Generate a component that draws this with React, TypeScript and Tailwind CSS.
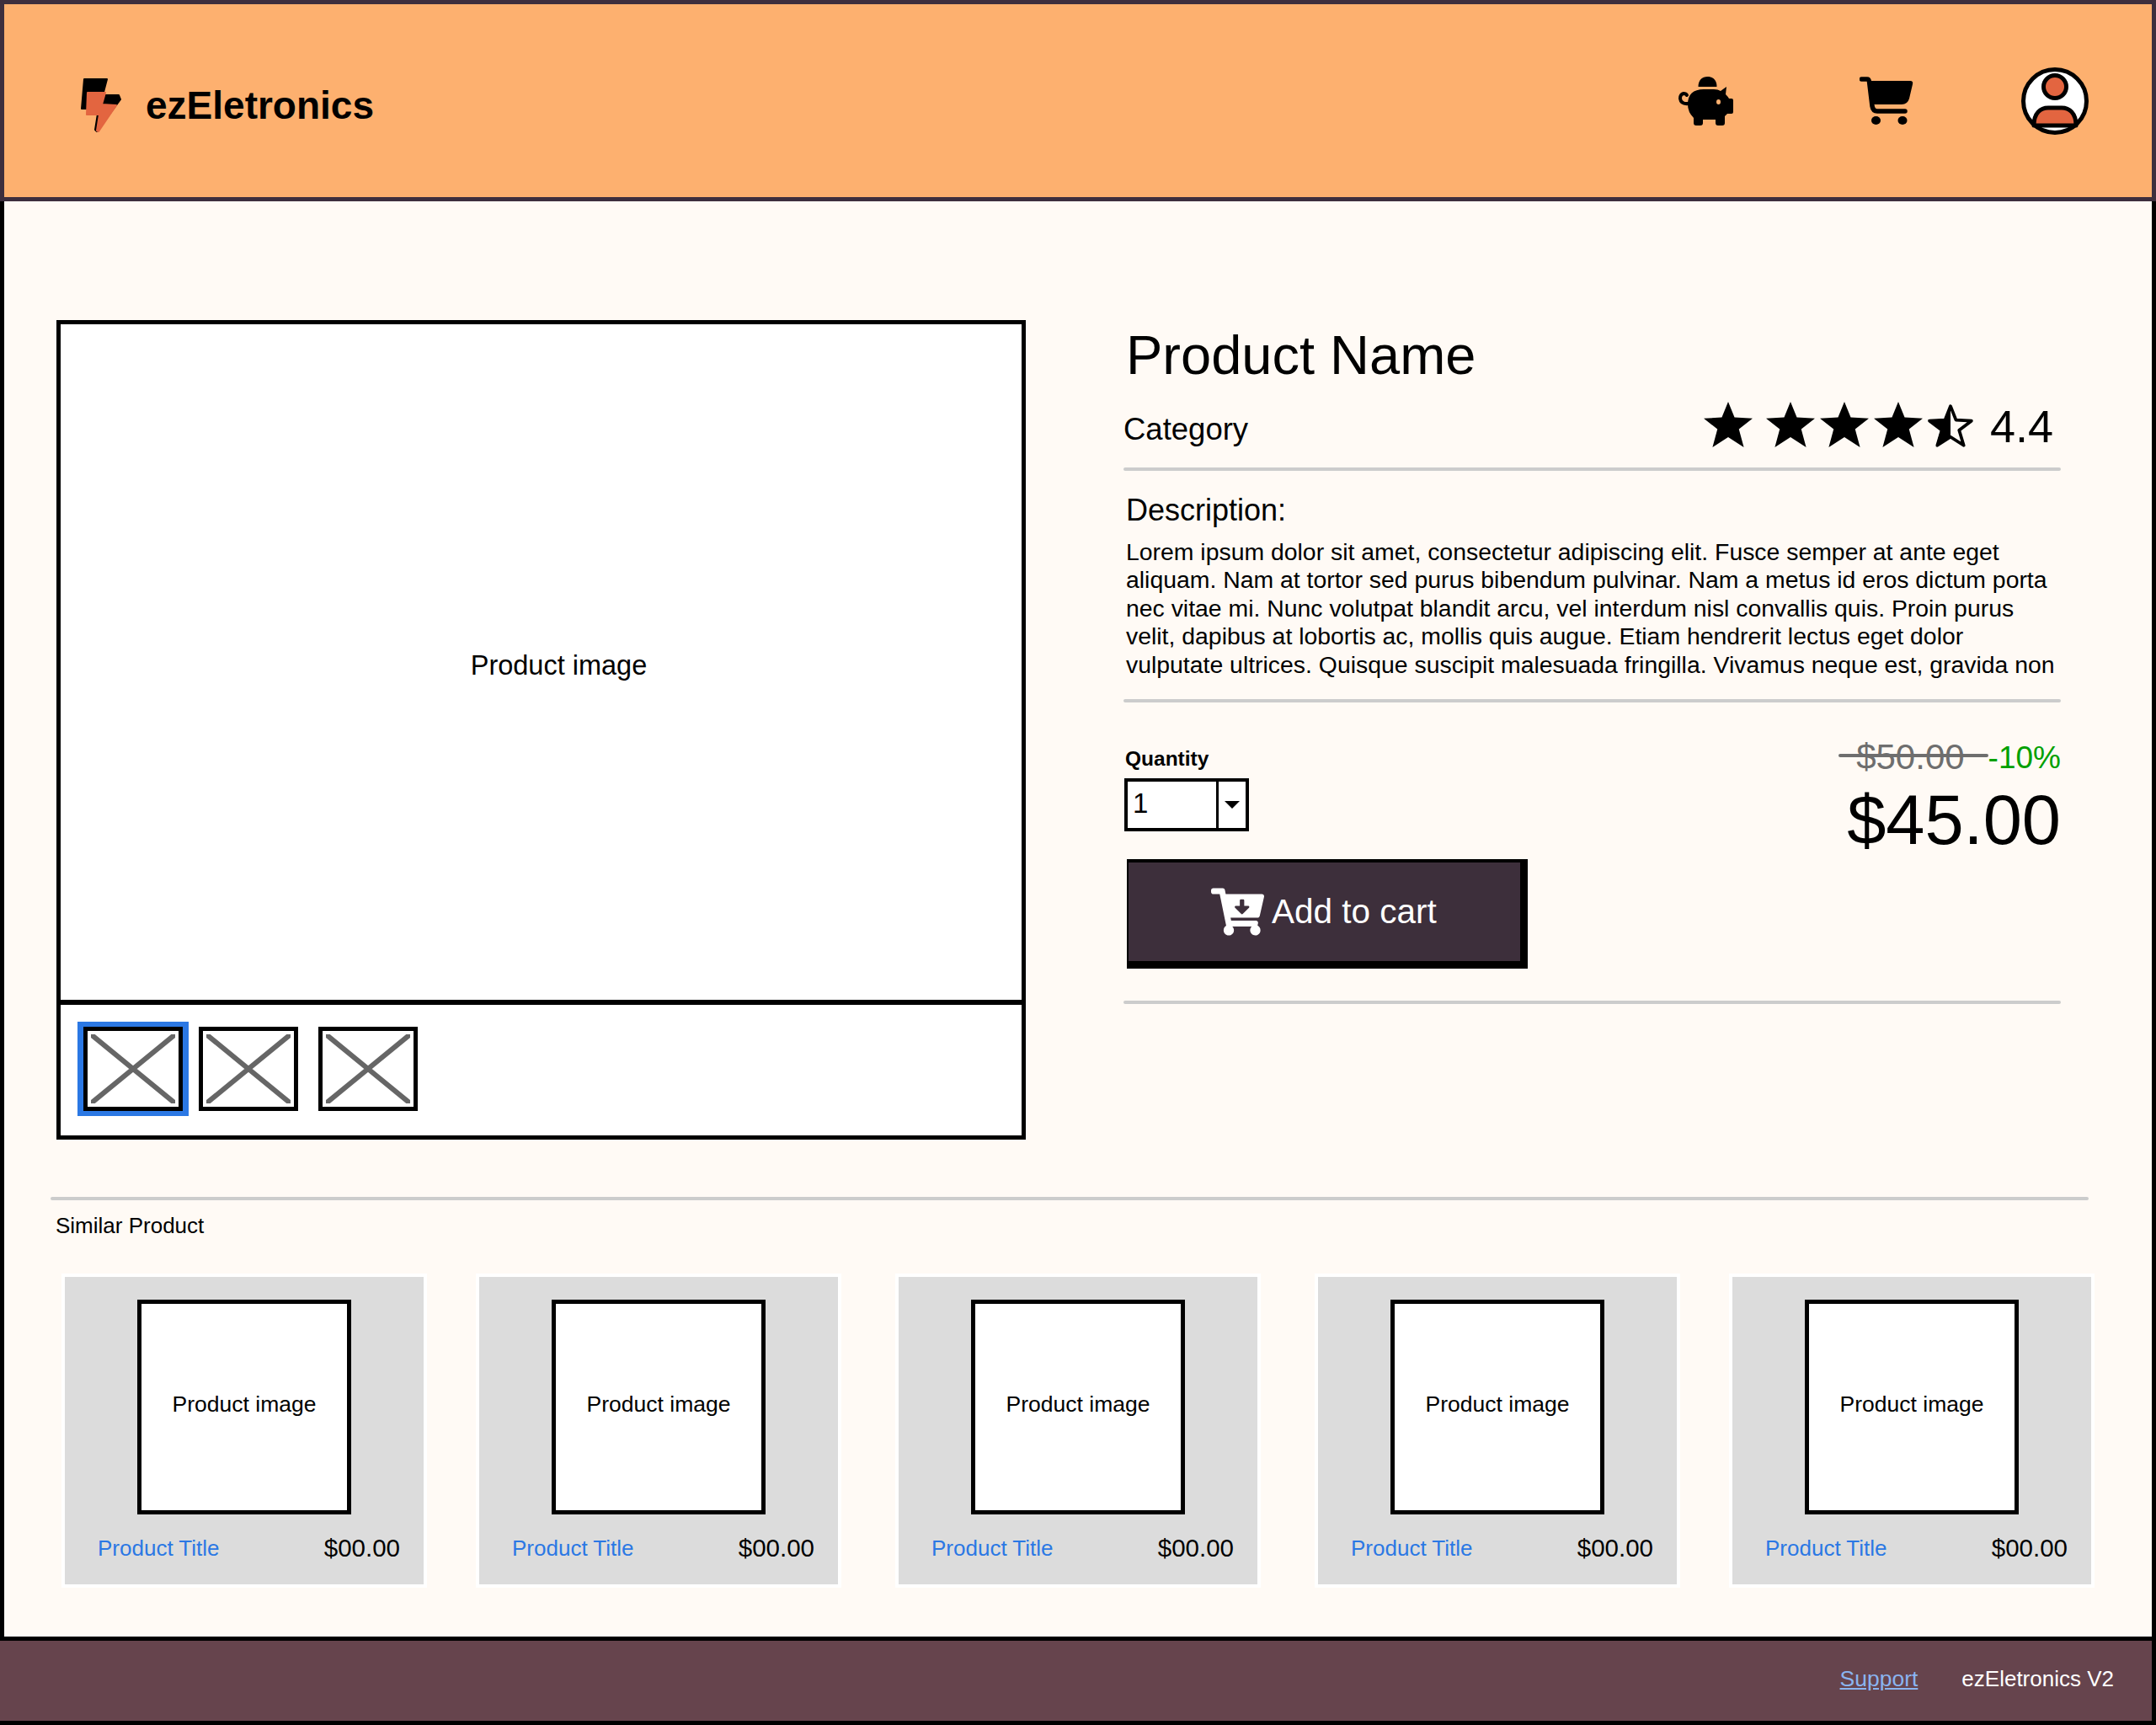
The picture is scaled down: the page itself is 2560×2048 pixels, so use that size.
import { FaCartArrowDown } from "react-icons/fa";

const LOREM = [
  "Lorem ipsum dolor sit amet, consectetur adipiscing elit. Fusce semper at ante eget",
  "aliquam. Nam at tortor sed purus bibendum pulvinar. Nam a metus id eros dictum porta",
  "nec vitae mi. Nunc volutpat blandit arcu, vel interdum nisl convallis quis. Proin purus",
  "velit, dapibus at lobortis ac, mollis quis augue. Etiam hendrerit lectus eget dolor",
  "vulputate ultrices. Quisque suscipit malesuada fringilla. Vivamus neque est, gravida non",
];

const CARD_GAPS = ["ml-[68px]", "ml-[58px]", "ml-[64px]", "ml-[64px]", "ml-[58px]"];

const STAR = "50,2 63,35 100,37 72,60 82,98 50,77 18,98 28,60 0,37 37,35";

const Logo = () => (
  <svg width="48" height="64" viewBox="0 0 48 64" className="shrink-0">
    <path d="M4 1 L31 1 L26 20 L45 20 L47 25 L19 63 L17 61 L21 36 L1 36 Z" fill="#000" stroke="#000" strokeWidth="2" strokeLinejoin="round" />
    <path d="M8 17 L29 17 L25 31 L42 32 L21 63 L19 62 L22 43 L7 43 Z" fill="#e36540" stroke="#e36540" strokeWidth="2" strokeLinejoin="round" />
  </svg>
);

const PiggyIcon = () => (
  <svg width="65" height="58" viewBox="0 0 65 58" className="shrink-0">
    <path d="M23.5 12 C23.5 4 28 0 34.5 0 C41 0 45.5 4 45.5 12 Z" fill="#000" />
    <path d="M30 15 H42 Q47 15 50 17 L57 12 L56 21 Q59 24 60 26 H63 Q65 26 65 28 V42 Q65 44 63 44 H58 Q56 46 55 47 V55 Q55 58 52 58 H47 Q44 58 44 55 V51 H29 V55 Q29 58 26 58 H21 Q18 58 18 55 V49 Q11 42 11 33 Q11 15 30 15 Z" fill="#000" />
    <path d="M12 32 Q3 33 2 26 Q2 21 6 20 Q9 20 10 22" fill="none" stroke="#000" strokeWidth="4" strokeLinecap="round" />
    <ellipse cx="47.5" cy="30" rx="2.5" ry="3" fill="#fdb06f" />
  </svg>
);

const CartIcon = () => (
  <svg width="64" height="57" viewBox="0 0 64 57" className="shrink-0">
    <path d="M2.5 3 H9 Q11 3 11.5 6 L15 35 Q16 41 21 41 H54" fill="none" stroke="#000" strokeWidth="5.5" strokeLinecap="round" strokeLinejoin="round" />
    <path d="M10 5 H60 Q64 5 63 9 L59 26 Q57 33 50 33 H14 Z" fill="#000" />
    <ellipse cx="19.5" cy="52" rx="5.5" ry="5" fill="#000" />
    <ellipse cx="51" cy="52" rx="5.5" ry="5" fill="#000" />
  </svg>
);

const Avatar = () => (
  <svg width="80" height="80" viewBox="0 0 80 80" className="shrink-0">
    <ellipse cx="40" cy="40" rx="37.5" ry="37.5" fill="#fff" stroke="#000" strokeWidth="5" />
    <ellipse cx="40" cy="23" rx="13.5" ry="13.5" fill="#e36540" stroke="#000" strokeWidth="5" />
    <path d="M15 69 C15 54 23 48 32 48 H48 C57 48 65 54 65 69 Z" fill="#e36540" stroke="#000" strokeWidth="5" strokeLinejoin="round" />
  </svg>
);

const Star = ({ className = "" }: { className?: string }) => (
  <svg width="58" height="56" viewBox="0 0 100 100" preserveAspectRatio="none" className={`shrink-0 ${className}`}>
    <polygon points={STAR} fill="#000" />
  </svg>
);

const HalfStar = () => (
  <svg width="54" height="53" viewBox="0 0 100 100" preserveAspectRatio="none" className="shrink-0 mt-[3px]">
    <polygon points="50,6 62,37 96,39 69,60 79,94 50,75 21,94 31,60 4,39 38,37" fill="none" stroke="#000" strokeWidth="7" strokeLinejoin="round" />
    <polygon points="50,3 50,75 18,97 28,60 0,37 37,35" fill="#000" />
  </svg>
);

const Thumb = ({ className = "" }: { className?: string }) => (
  <div className={`w-[118px] h-[100px] border-[5px] border-black bg-white p-[4px] ${className}`}>
    <svg width="100%" height="100%" viewBox="0 0 100 82" preserveAspectRatio="none">
      <path d="M0 0 L100 82 M100 0 L0 82" stroke="#666" strokeWidth="6" />
    </svg>
  </div>
);

const Divider = ({ className = "" }: { className?: string }) => (
  <div className={`h-[4px] bg-[#cccccc] rounded-full shrink-0 ${className}`} />
);

const ProductCard = ({ className }: { className: string }) => (
  <div className={`w-[434px] h-[373px] border-4 border-white bg-[#dcdcdc] flex flex-col shrink-0 ${className}`}>
    <div className="mt-[27px] mx-auto w-[254px] h-[255px] border-[5px] border-black bg-white flex items-center justify-center pb-[5px] text-[26.5px]">
      Product image
    </div>
    <div className="mt-[24px] pl-[39px] pr-[28px] flex items-center justify-between leading-[32px]">
      <span className="text-[26px] text-[#2b78e4]">Product Title</span>
      <span className="text-[29.5px]">$00.00</span>
    </div>
  </div>
);

export default function App() {
  return (
    <div className="w-[2560px] h-[2048px] flex flex-col bg-[#fffaf5] text-black font-['Liberation_Sans',sans-serif]">
      {/* HEADER */}
      <header className="h-[239px] shrink-0 border-[5px] border-[#3d2e3d] bg-[#fdb06f] flex items-center pl-[91px]">
        <div className="flex items-center mt-[10px]">
          <Logo />
          <span className="ml-[29px] text-[46px] font-bold leading-none">ezEletronics</span>
        </div>
        <div className="ml-auto">
          <PiggyIcon />
        </div>
        <div className="ml-[150px]">
          <CartIcon />
        </div>
        <div className="ml-[128px] mr-[75px]">
          <Avatar />
        </div>
      </header>

      {/* MAIN */}
      <main className="flex-1 border-x-[5px] border-black flex flex-col">
        <div className="flex pt-[141px]">
          {/* GALLERY */}
          <div className="ml-[62px] w-[1151px] h-[973px] border-[5px] border-black bg-white flex flex-col shrink-0">
            <div className="flex-1 flex items-center justify-center pl-[42px] pt-[8px] text-[32.5px]">Product image</div>
            <div className="h-[161px] border-t-[6px] border-black flex items-start pl-[20px] pt-[20px]">
              <div className="border-y-[6px] border-x-[7px] border-[#2b78e4]">
                <Thumb />
              </div>
              <Thumb className="ml-[12px] mt-[6px]" />
              <Thumb className="ml-[24px] mt-[6px]" />
            </div>
          </div>

          {/* DETAILS */}
          <div className="ml-[116px] w-[1113px] flex flex-col">
            <div className="h-[80px] flex items-center pl-[3px] pt-[2px] text-[65px] leading-none">Product Name</div>
            <div className="h-[95px] flex items-center justify-between">
              <span className="text-[36.5px] pt-[6px]">Category</span>
              <div className="flex items-start gap-[6px] mr-[9px] mt-[-6px]">
                <Star className="mr-[10px]" />
                <Star />
                <Star />
                <Star />
                <HalfStar />
                <span className="ml-[14px] mt-[2px] text-[54px] leading-[56px]">4.4</span>
              </div>
            </div>
            <Divider />

            <div className="h-[80px] flex items-center pt-[13px] pl-[3px] text-[36px]">Description:</div>
            <div className="pl-[3px] text-[28.4px] leading-[33.4px] whitespace-nowrap">
              {LOREM.map((line) => (
                <div key={line}>{line}</div>
              ))}
            </div>
            <Divider className="mt-[24px]" />

            <div className="flex justify-between">
              <div className="flex flex-col items-start">
                <div className="mt-[52px] h-[30px] flex items-center pl-[2px] text-[24.5px] font-bold">Quantity</div>
                <div className="mt-[8px] ml-[1px] w-[148px] h-[63px] border-4 border-black bg-white flex">
                  <div className="flex-1 pl-[6px] pt-[6px] text-[33px] leading-[40px]">1</div>
                  <div className="w-[35px] border-l-[3px] border-black flex items-center justify-center">
                    <svg width="18" height="9" viewBox="0 0 18 9">
                      <path d="M0 0 H18 L9 9 Z" fill="#000" />
                    </svg>
                  </div>
                </div>
                <div className="mt-[33px] ml-[4px] w-[476px] h-[130px] bg-black pt-[4px] pl-[2px] pr-[9px] pb-[9px]">
                  <div className="h-full bg-[#3d2f3b] flex items-center pl-[98px] text-white">
                    <FaCartArrowDown className="w-[63px] h-[57px]" />
                    <span className="ml-[9px] text-[40.5px] leading-none">Add to cart</span>
                  </div>
                </div>
              </div>
              <div className="flex flex-col items-end">
                <div className="mt-[45px] h-[40px] flex items-center leading-none">
                  <span className="relative text-[#6e6e6e] text-[42px]">
                    $50.00
                    <span className="absolute left-[-21px] right-[-28px] top-[17px] h-[4px] bg-[#6e6e6e] rounded-full" />
                  </span>
                  <span className="ml-[28px] text-[37px] text-[#00a000]">-10%</span>
                </div>
                <div className="mt-[9px] h-[90px] flex items-center text-[83px] leading-none">$45.00</div>
              </div>
            </div>
            <Divider className="mt-[38px]" />
          </div>
        </div>

        {/* SIMILAR PRODUCTS */}
        <Divider className="mt-[68px] ml-[55px] w-[2420px]" />
        <div className="mt-[15px] ml-[61px] text-[26px] leading-[30px]">Similar Product</div>
        <div className="mt-[42px] flex">
          {CARD_GAPS.map((gap, i) => (
            <ProductCard key={i} className={gap} />
          ))}
        </div>
      </main>

      {/* FOOTER */}
      <footer className="h-[105px] shrink-0 border-y-[5px] border-r-[5px] border-black bg-[#66444d] flex items-center justify-end pr-[45px] pb-[4px] text-[26px] text-white">
        <span className="underline text-[26.5px] text-[#8ab4f0]">Support</span>
        <span className="ml-[52px]">ezEletronics V2</span>
      </footer>
    </div>
  );
}
